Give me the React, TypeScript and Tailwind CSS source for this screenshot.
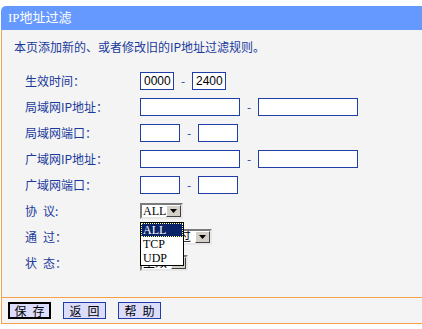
import React from "react"

const cjk = { fontFamily: '"Noto Sans CJK SC", "Liberation Sans", sans-serif' }
const serif = { fontFamily: '"Liberation Serif", "Noto Sans CJK SC", serif' }

function Caixa({ w, valor }: { w: string; valor?: string }) {
  return (
    <div
      className={`${w} h-[18px] border border-[#1f3fa6] bg-white text-[12px] leading-[16px] pl-[3px] text-black`}
      style={{ fontFamily: '"Liberation Sans", sans-serif' }}
    >
      {valor}
    </div>
  )
}

function Traco() {
  return <span className="w-[18px] text-center text-[#1f3fa6] text-[12px] leading-[16px]">-</span>
}

function Seta() {
  return (
    <div className="w-[15px] shrink-0 h-full bg-[#d4d0c8] border border-t-white border-l-white border-b-[#404040] border-r-[#404040] flex items-center justify-center">
      <svg width="7" height="4" viewBox="0 0 7 4">
        <path d="M0 0H7L3.5 4Z" fill="#000" />
      </svg>
    </div>
  )
}

function Selecao({ w, texto }: { w: string; texto: string }) {
  return (
    <div
      className={`${w} h-[16px] flex border-2 border-t-[#7b7b7b] border-l-[#7b7b7b] border-b-[#e8e8e8] border-r-[#e8e8e8] bg-white`}
    >
      <span className="flex-1 min-w-0 text-[12px] leading-[12px] pl-px text-black overflow-hidden whitespace-nowrap" style={serif}>
        {texto}
      </span>
      <Seta />
    </div>
  )
}

function Linha({ rotulo, children }: { rotulo: string; children: React.ReactNode }) {
  return (
    <div className="flex items-center h-[26px] pl-[23px]">
      <span className="w-[115px] shrink-0 text-[12px] leading-[14px] text-[#1a3a9c] whitespace-pre">{rotulo}</span>
      <div className="flex items-center">{children}</div>
    </div>
  )
}

function Botao({ texto, ativo }: { texto: string; ativo?: boolean }) {
  return (
    <div
      className={`w-[43px] h-[17px] flex items-center justify-center bg-[#dcdcfc] text-black text-[12px] leading-[12px] whitespace-pre ${
        ativo ? "border-2 border-black" : "border border-[#1f3fa6]"
      }`}
    >
      {texto}
    </div>
  )
}

export default function App() {
  return (
    <div className="w-[422px] h-[329px] bg-white pt-[6px] pl-px" style={cjk}>
      <div className="h-[24px] bg-[#6699ff] rounded-tl-[5px] text-white text-[13px] leading-[14px] pl-[7px] flex items-center" style={serif}>
        IP地址过滤
      </div>
      <div className="border-l border-b border-[#f7a24a] bg-[#f4f4f4]">
        <div className="h-[267px]">
          <div className="h-[38px] pt-[10px] pl-[12px] text-[12px] leading-[14px] text-[#1a3a9c]">
            本页添加新的、或者修改旧的IP地址过滤规则。
          </div>
          <Linha rotulo="生效时间：">
            <Caixa w="w-[34px]" valor="0000" />
            <Traco />
            <Caixa w="w-[34px]" valor="2400" />
          </Linha>
          <Linha rotulo="局域网IP地址：">
            <Caixa w="w-[100px]" />
            <Traco />
            <Caixa w="w-[100px]" />
          </Linha>
          <Linha rotulo="局域网端口：">
            <Caixa w="w-[40px]" />
            <Traco />
            <Caixa w="w-[40px]" />
          </Linha>
          <Linha rotulo="广域网IP地址：">
            <Caixa w="w-[100px]" />
            <Traco />
            <Caixa w="w-[100px]" />
          </Linha>
          <Linha rotulo="广域网端口：">
            <Caixa w="w-[40px]" />
            <Traco />
            <Caixa w="w-[40px]" />
          </Linha>
          <Linha rotulo={"协\u2002议:"}>
            <div className="relative">
              <Selecao w="w-[43px]" texto="ALL" />
              <div className="absolute left-0 top-[19px] z-10 w-[44px] border border-black bg-white text-[12px]" style={serif}>
                <div className="h-[14px] leading-[14px] pl-[2px] bg-[#0a246a] text-white outline-1 outline-dotted outline-[#ffff80] -outline-offset-1">
                  ALL
                </div>
                <div className="h-[14px] leading-[14px] pl-[2px] text-black">TCP</div>
                <div className="h-[14px] leading-[14px] pl-[2px] text-black">UDP</div>
              </div>
            </div>
          </Linha>
          <Linha rotulo={"通\u2002过："}>
            <Selecao w="w-[72px]" texto="允许通过" />
          </Linha>
          <Linha rotulo={"状\u2002态："}>
            <Selecao w="w-[48px]" texto="生效" />
          </Linha>
        </div>
        <div className="h-[26px] border-t border-[#f7a24a] flex items-center gap-3 pl-[6px]">
          <Botao texto={"保\u2002存"} ativo />
          <Botao texto={"返\u2002回"} />
          <Botao texto={"帮\u2002助"} />
        </div>
      </div>
    </div>
  )
}
